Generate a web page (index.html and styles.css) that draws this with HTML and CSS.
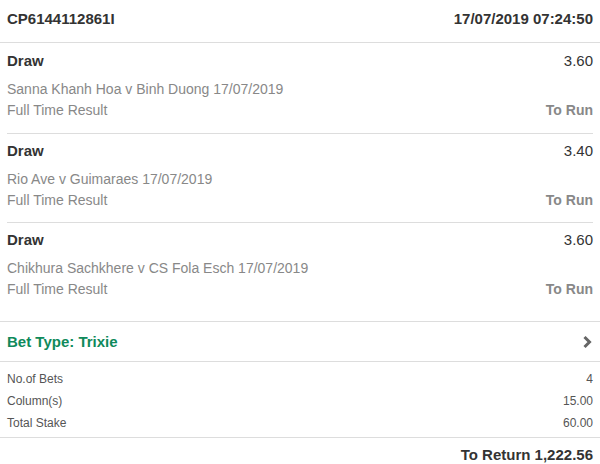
FILE: index.html
```html
<!DOCTYPE html>
<html lang="en">
<head>
  <meta charset="UTF-8">
  <title>Bet Receipt</title>
  <link rel="stylesheet" href="styles.css">
</head>
<body>
  <div class="receipt">
    <div class="receipt-head">
      <span>CP6144112861I</span>
      <span>17/07/2019 07:24:50</span>
    </div>

    <div class="selections">
      <div class="selection">
        <div class="sel-top">
          <span class="sel-name">Draw</span>
          <span class="sel-odds">3.60</span>
        </div>
        <div class="sel-event">Sanna Khanh Hoa v Binh Duong 17/07/2019</div>
        <div class="sel-market">
          <span>Full Time Result</span>
          <span class="sel-status">To Run</span>
        </div>
      </div>
      <div class="selection">
        <div class="sel-top">
          <span class="sel-name">Draw</span>
          <span class="sel-odds">3.40</span>
        </div>
        <div class="sel-event">Rio Ave v Guimaraes 17/07/2019</div>
        <div class="sel-market">
          <span>Full Time Result</span>
          <span class="sel-status">To Run</span>
        </div>
      </div>
      <div class="selection">
        <div class="sel-top">
          <span class="sel-name">Draw</span>
          <span class="sel-odds">3.60</span>
        </div>
        <div class="sel-event">Chikhura Sachkhere v CS Fola Esch 17/07/2019</div>
        <div class="sel-market">
          <span>Full Time Result</span>
          <span class="sel-status">To Run</span>
        </div>
      </div>
    </div>

    <div class="bet-type">
      <span>Bet Type: Trixie</span>
      <svg class="chevron" width="10" height="14" viewBox="0 0 10 14">
        <polyline points="2.5,2 7.5,7 2.5,12" fill="none" stroke="#666" stroke-width="3"/>
      </svg>
    </div>

    <div class="summary">
      <div class="sum-row"><span>No.of Bets</span><span>4</span></div>
      <div class="sum-row"><span>Column(s)</span><span>15.00</span></div>
      <div class="sum-row"><span>Total Stake</span><span>60.00</span></div>
    </div>

    <div class="to-return">To Return 1,222.56</div>
  </div>
</body>
</html>
```

FILE: styles.css
```css
body {
  margin: 0;
  padding: 0;
  background: #fff;
  font-family: "Liberation Sans", Arial, sans-serif;
  color: #333;
}
.receipt {
  width: 600px;
}
.receipt-head {
  display: flex;
  justify-content: space-between;
  align-items: center;
  padding: 9px 7px 13px;
  line-height: 20px;
  font-size: 15px;
  font-weight: bold;
  border-bottom: 1px solid #ddd;
}
.selections {
  padding-bottom: 10px;
  border-bottom: 1px solid #ddd;
}
.selection {
  margin: 0 7px;
  padding: 7px 0 11px;
  border-bottom: 1px solid #ddd;
  font-size: 14px;
}
.selection:first-child {
  padding-top: 8px;
  padding-bottom: 12px;
}
.selection:last-child {
  border-bottom: none;
}
.sel-top {
  display: flex;
  justify-content: space-between;
  line-height: 20px;
}
.sel-name {
  font-size: 15px;
  font-weight: bold;
}
.sel-odds {
  font-size: 15px;
}
.sel-event {
  margin-top: 8px;
  line-height: 20px;
  color: #888;
}
.sel-market {
  display: flex;
  justify-content: space-between;
  line-height: 22px;
  color: #888;
}
.sel-status {
  font-weight: bold;
}
.bet-type {
  display: flex;
  justify-content: space-between;
  align-items: center;
  height: 39px;
  padding: 0 8px 0 7px;
  font-size: 15px;
  font-weight: bold;
  color: #0f8a5b;
  border-bottom: 1px solid #ddd;
}
.summary {
  padding: 6px 7px 3px;
  font-size: 12px;
  color: #555;
  border-bottom: 1px solid #ddd;
}
.sum-row {
  display: flex;
  justify-content: space-between;
  line-height: 22px;
}
.to-return {
  padding: 7px 7px 0;
  line-height: 20px;
  text-align: right;
  font-size: 15px;
  font-weight: bold;
}
```
